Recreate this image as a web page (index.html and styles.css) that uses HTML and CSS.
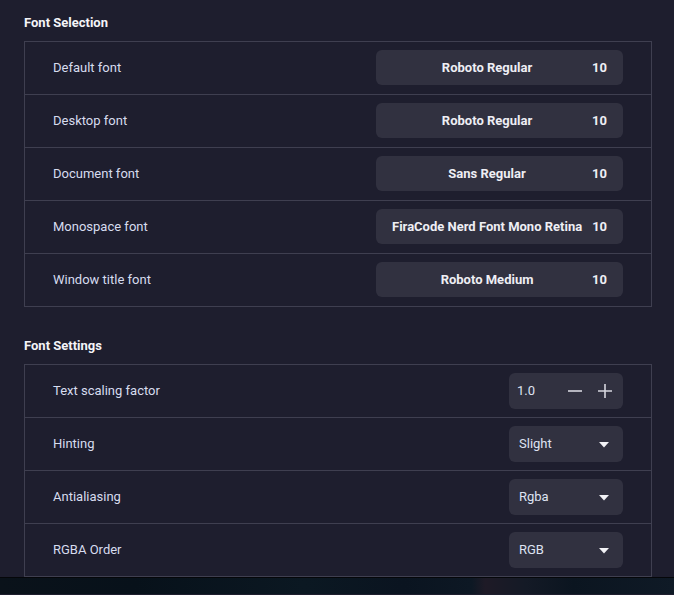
FILE: index.html
```html
<!DOCTYPE html>
<html>
<head>
<meta charset="utf-8">
<link rel="stylesheet" href="styles.css">
</head>
<body>
<div class="window">
  <section class="section">
    <h2 class="section-title">Font Selection</h2>
    <div class="panel">
      <div class="row">
        <span class="label">Default font</span>
        <div class="font-btn"><span class="font-name">Roboto Regular</span><span class="font-size">10</span></div>
      </div>
      <div class="row">
        <span class="label">Desktop font</span>
        <div class="font-btn"><span class="font-name">Roboto Regular</span><span class="font-size">10</span></div>
      </div>
      <div class="row">
        <span class="label">Document font</span>
        <div class="font-btn"><span class="font-name">Sans Regular</span><span class="font-size">10</span></div>
      </div>
      <div class="row">
        <span class="label">Monospace font</span>
        <div class="font-btn"><span class="font-name">FiraCode Nerd Font Mono Retina</span><span class="font-size">10</span></div>
      </div>
      <div class="row">
        <span class="label">Window title font</span>
        <div class="font-btn"><span class="font-name">Roboto Medium</span><span class="font-size">10</span></div>
      </div>
    </div>
  </section>
  <section class="section second">
    <h2 class="section-title">Font Settings</h2>
    <div class="panel">
      <div class="row">
        <span class="label">Text scaling factor</span>
        <div class="control spin">
          <span class="spin-value">1.0</span>
          <span class="spin-btn"><svg width="14" height="14" viewBox="0 0 14 14"><path d="M0 7H14" stroke="#d6d6de" stroke-width="1.6"/></svg></span>
          <span class="spin-btn"><svg width="14" height="14" viewBox="0 0 14 14"><path d="M0 7H14M7 0V14" stroke="#d6d6de" stroke-width="1.6"/></svg></span>
        </div>
      </div>
      <div class="row">
        <span class="label">Hinting</span>
        <div class="control dropdown"><span class="dd-value">Slight</span><svg class="caret" width="10" height="6" viewBox="0 0 10 6"><path d="M0 0H10L5 5.5Z" fill="#f2f2f6"/></svg></div>
      </div>
      <div class="row">
        <span class="label">Antialiasing</span>
        <div class="control dropdown"><span class="dd-value">Rgba</span><svg class="caret" width="10" height="6" viewBox="0 0 10 6"><path d="M0 0H10L5 5.5Z" fill="#f2f2f6"/></svg></div>
      </div>
      <div class="row">
        <span class="label">RGBA Order</span>
        <div class="control dropdown"><span class="dd-value">RGB</span><svg class="caret" width="10" height="6" viewBox="0 0 10 6"><path d="M0 0H10L5 5.5Z" fill="#f2f2f6"/></svg></div>
      </div>
    </div>
  </section>
</div>
<div class="wallpaper"></div>
</body>
</html>
```
FILE: styles.css
```css
* { box-sizing: border-box; }
html, body { margin: 0; padding: 0; }
body {
  width: 674px;
  height: 595px;
  overflow: hidden;
  background: #1e1e2e;
  font-family: Roboto, "Liberation Sans", sans-serif;
  font-size: 13px;
  color: #d7dcee;
}
.window {
  height: 578px;
  background: #1e1e2e;
  border-bottom: 1px solid #05070a;
  padding: 0 22px 0 24px;
}
.section-title {
  margin: 0;
  padding: 15px 0 10px;
  line-height: 16px;
  font-size: 13px;
  font-weight: 700;
  color: #f4f4f8;
}
.second { margin-top: 16px; }
.panel {
  border: 1px solid #3f3f50;
}
.row {
  height: 53px;
  display: flex;
  align-items: center;
  justify-content: space-between;
  padding: 0 28px;
  border-top: 1px solid #3f3f50;
}
.row:first-child {
  height: 52px;
  border-top: none;
}
.label {
  color: #d7dcee;
  margin-top: -1px;
}
.font-btn {
  width: 247px;
  height: 35px;
  margin-top: -1px;
  background: #313140;
  border-radius: 6px;
  display: flex;
  align-items: center;
  padding: 0 16px;
  gap: 10px;
  font-weight: 700;
  color: #eeeef4;
}
.font-name {
  flex: 1;
  text-align: center;
  white-space: nowrap;
}
.control {
  width: 114px;
  height: 36px;
  background: #313140;
  border-radius: 6px;
  display: flex;
  align-items: center;
  color: #dfe3f2;
}
.spin { padding: 0 4px 0 8px; gap: 2px; }
.spin-value { flex: 1; margin-top: -2px; }
.dd-value { margin-top: -2px; }
.spin-btn {
  width: 28px;
  height: 28px;
  display: flex;
  align-items: center;
  justify-content: center;
}
.dropdown {
  padding: 0 14px 0 10px;
  justify-content: space-between;
}
.caret { display: block; margin-top: 1px; }
.wallpaper {
  height: 16px;
  background: linear-gradient(90deg, #0a121a 0%, #07111a 20%, #0b1822 45%, #0a1420 60%, #0d1824 70%, #1e1a26 72%, #141a26 78%, #0b1520 85%, #0f1a26 100%);
}
```
